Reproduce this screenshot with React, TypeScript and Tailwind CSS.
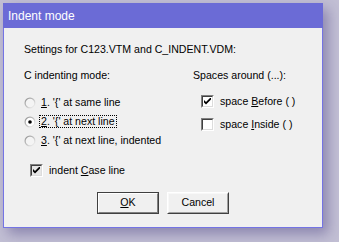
import React from 'react';

const font = { fontFamily: '"Liberation Sans", Arial, sans-serif' };

const Radio: React.FC<{ checked?: boolean }> = ({ checked }) => (
  <svg width="12" height="12" viewBox="0 0 12 12" className="shrink-0">
    <defs>
      <linearGradient id={checked ? 'rg1' : 'rg0'} x1="0" y1="0" x2="1" y2="1">
        <stop offset="0" stopColor="#8a8a8a" />
        <stop offset="0.55" stopColor="#c8c8c8" />
        <stop offset="1" stopColor="#ffffff" />
      </linearGradient>
    </defs>
    <circle cx="6" cy="6" r="5.5" fill={`url(#${checked ? 'rg1' : 'rg0'})`} />
    <circle cx="6" cy="6" r="4.3" fill={checked ? '#ffffff' : '#f4f4f4'} />
    {checked && <circle cx="6" cy="6" r="1.8" fill="#000" />}
  </svg>
);

const Check: React.FC<{ checked?: boolean; fill?: string }> = ({ checked, fill = '#ffffff' }) => (
  <div className="w-[13px] h-[13px] shrink-0 border-t border-l border-t-[#808080] border-l-[#808080] border-b border-r border-b-white border-r-white">
    <div
      className="w-full h-full border-t border-l border-t-[#404040] border-l-[#404040] border-b border-r border-b-[#dcdcdc] border-r-[#dcdcdc] flex items-center justify-center"
      style={{ backgroundColor: fill }}
    >
      {checked && (
        <svg width="7" height="7" viewBox="0 0 7 7">
          <path d="M0 2 L0 4.5 L2 6.5 L7 1.5 L7 -1 L2 4 Z" fill="#000" />
        </svg>
      )}
    </div>
  </div>
);

const U: React.FC<{ children: React.ReactNode }> = ({ children }) => (
  <span className="underline underline-offset-[1px]">{children}</span>
);

export default function App() {
  return (
    <div
      className="w-[339px] h-[242px] bg-[#c2bfd4] pt-[3px] pl-[3px] overflow-hidden text-black"
      style={font}
    >
      <div className="w-[320px] h-[225px] flex flex-col border border-[#7474e4] border-t-0 shadow-[5px_6px_12px_rgba(60,50,120,0.4)]">
        <div className="h-[25px] bg-[#6b6bd6] flex items-center pl-[5px] text-white text-[12px] -mx-px">
          Indent mode
        </div>
        <div className="flex-1 bg-[#f0f0f0] pl-[20px] pt-[14px] text-[10.6px]">
          <div className="h-[14px] leading-[14px]">Settings for C123.VTM and C_INDENT.VDM:</div>

          <div className="flex mt-[12px]">
            <div className="w-[169px] flex flex-col">
              <div className="h-[14px] leading-[14px]">C indenting mode:</div>
              <div className="mt-[11px] flex flex-col">
                <div className="h-[19px] flex items-center gap-[3px]">
                  <Radio />
                  <span className="px-[1px] border border-transparent leading-[11px]"><U>1</U>. '{'{'}' at same line</span>
                </div>
                <div className="h-[19px] flex items-center gap-[3px]">
                  <Radio checked />
                  <span className="px-[1px] border border-dotted border-black leading-[11px]"><U>2</U>. '{'{'}' at next line</span>
                </div>
                <div className="h-[19px] flex items-center gap-[3px]">
                  <Radio />
                  <span className="px-[1px] border border-transparent leading-[11px]"><U>3</U>. '{'{'}' at next line, indented</span>
                </div>
              </div>
            </div>
            <div className="flex flex-col">
              <div className="h-[14px] leading-[14px]">Spaces around (...):</div>
              <div className="mt-[8px] flex flex-col pl-[8px]">
                <div className="h-[23px] flex items-center gap-[6px]">
                  <Check checked />
                  <span>space <U>B</U>efore ( )</span>
                </div>
                <div className="h-[23px] flex items-center gap-[6px]">
                  <Check />
                  <span>space <U>I</U>nside ( )</span>
                </div>
              </div>
            </div>
          </div>

          <div className="mt-[11px] h-[19px] flex items-center gap-[6px] pl-[6px]">
            <Check checked fill="#e6e6e6" />
            <span>indent <U>C</U>ase line</span>
          </div>

          <div className="mt-[12px] flex gap-[8px] pl-[73px]">
            <button className="w-[62px] h-[22px] border border-[#404040] bg-[#f0f0f0] p-0">
              <div className="w-full h-full border border-t-white border-l-white border-b-[#808080] border-r-[#808080] flex items-center justify-center">
                <span><U>O</U>K</span>
              </div>
            </button>
            <button className="w-[62px] h-[22px] border border-t-white border-l-white border-b-[#404040] border-r-[#404040] bg-[#f0f0f0] p-0">
              <div className="w-full h-full border border-t-[#f8f8f8] border-l-[#f8f8f8] border-b-[#a0a0a0] border-r-[#a0a0a0] flex items-center justify-center">
                Cancel
              </div>
            </button>
          </div>
        </div>
      </div>
    </div>
  );
}
